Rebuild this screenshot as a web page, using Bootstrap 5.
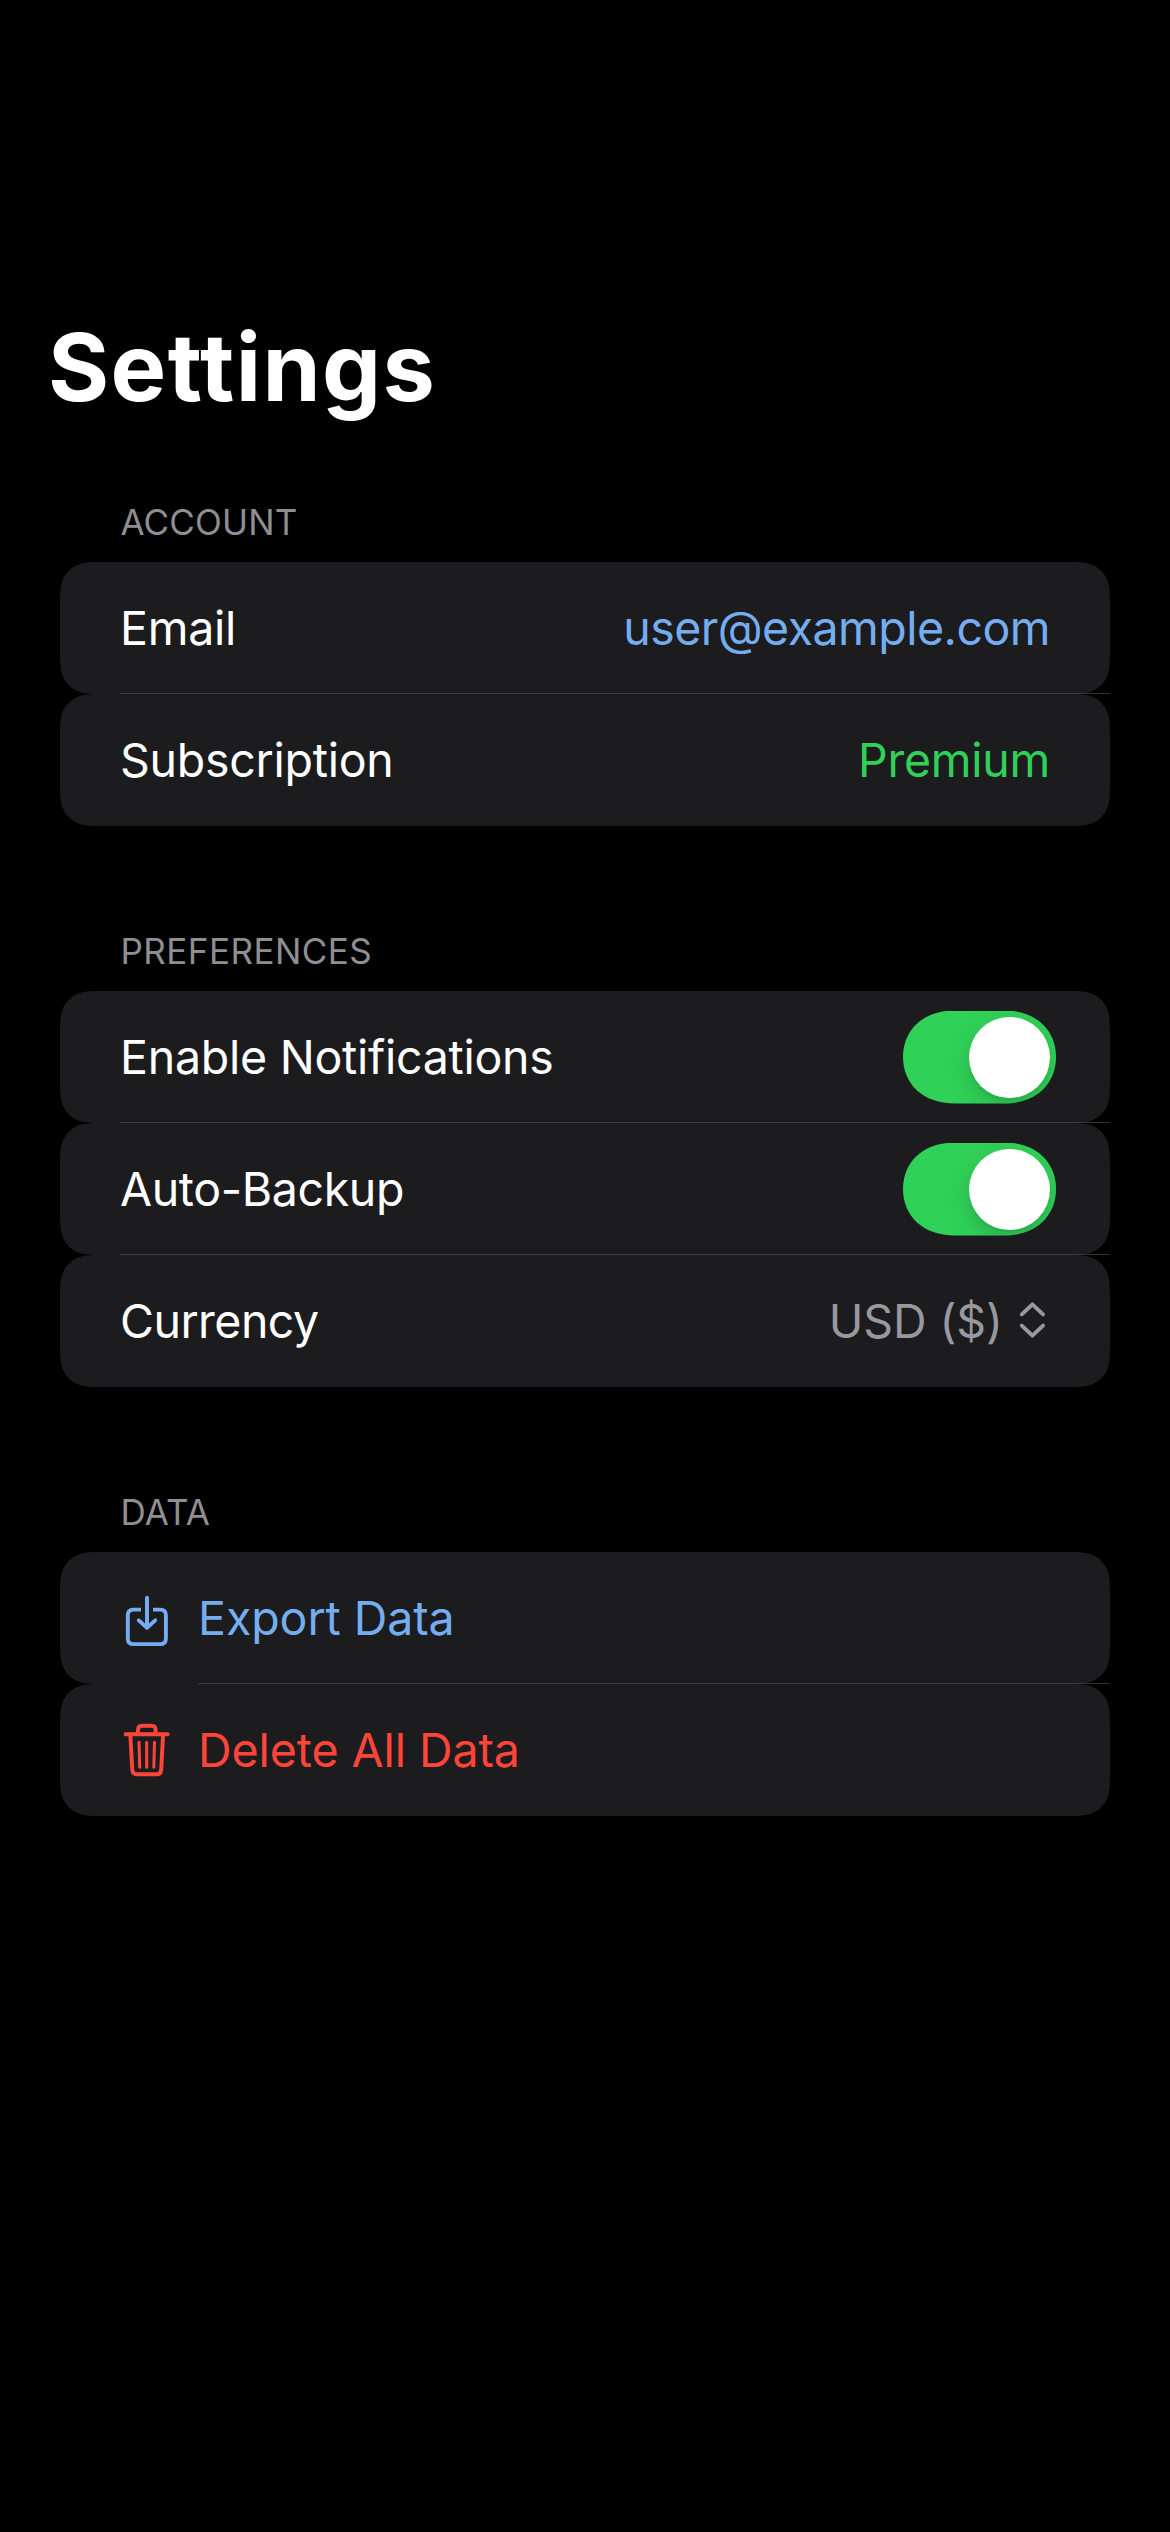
<!DOCTYPE html>
<html lang="en" data-bs-theme="dark">
<head>
<meta charset="utf-8">
<meta name="viewport" content="width=device-width, initial-scale=1">
<title>Settings</title>
<link href="https://cdn.jsdelivr.net/npm/bootstrap@5.3.0/dist/css/bootstrap.min.css" rel="stylesheet">
<style>
  body {
    background: #000;
    color: #fff;
    font-family: Inter, "Liberation Sans", sans-serif;
    min-height: 2532px;
  }
  .settings-page { padding: 310px 60px 0; }
  .page-title {
    font-size: 93.5px;
    line-height: 115px;
    font-weight: 700;
    letter-spacing: 1.4px;
    margin: 0 0 76px -12px;
  }
  .settings-section { margin-bottom: 104px; }
  .section-label {
    font-size: 35px;
    line-height: 42px;
    font-weight: 400;
    letter-spacing: .15px;
    color: #8e8e93;
    padding-left: 60.5px;
    margin-bottom: 19px;
  }
  .label-wide { letter-spacing: .47px; }
  .settings-row {
    height: 132px;
    padding: 0 60px;
    font-size: 46.5px;
    line-height: 56px;
    letter-spacing: -.26px;
    background: none;
    border: 0;
    color: #fff;
    isolation: isolate;
  }
  /* row background with smooth, continuous corners */
  .settings-row::before {
    content: "";
    position: absolute;
    inset: 0;
    z-index: -1;
    background: #1c1c1e;
    clip-path: path("M45.9 0H1004.1C1017.3 0 1024 0 1029.9 2L1031.1 2.3C1038.8 5.1 1044.9 11.2 1047.7 18.9C1050 26 1050 32.7 1050 45.9V86.1C1050 99.3 1050 106 1047.7 113.1C1044.9 120.8 1038.8 126.9 1031.1 129.7L1029.9 130C1024 132 1017.3 132 1004.1 132H45.9C32.7 132 26 132 20.1 130L18.9 129.7C11.2 126.9 5.1 120.8 2.3 113.1C0 106 0 99.3 0 86.1V45.9C0 32.7 0 26 2.3 18.9C5.1 11.2 11.2 5.1 18.9 2.3L20.1 2C26 0 32.7 0 45.9 0Z");
  }
  .settings-row:not(:last-child)::after {
    content: "";
    position: absolute;
    left: 60px;
    right: 0;
    bottom: 0;
    height: 1px;
    background: rgba(84, 84, 88, .6);
  }
  .icon-row:not(:last-child)::after { left: 138px; }
  .tight { letter-spacing: -.53px; }
  .snug { letter-spacing: -.38px; }
  .plain { letter-spacing: -.07px; }
  .tone-blue { color: #74aef0; }
  .tone-green { color: #30d158; }
  .tone-red { color: #ff453a; }
  .tone-gray { color: #98989f; }
  .row-icon { width: 78px; height: 132px; fill: none; stroke: currentColor; stroke-width: 3.9; stroke-linecap: round; stroke-linejoin: round; }
  .chevrons { width: 47px; height: 132px; fill: none; stroke: currentColor; stroke-width: 3.9; stroke-linecap: round; stroke-linejoin: round; }
  .toggle {
    width: 153px;
    height: 93px;
    padding: 6px;
    margin-right: -6px;
    background: #30d158;
    clip-path: path("M0 46.5C0 19.5 20 0 52 0H101C133 0 153 19.5 153 46.5C153 73.5 133 93 101 93H52C20 93 0 73.5 0 46.5Z");
  }
  .knob {
    width: 81px;
    height: 81px;
    background: #fff;
    box-shadow: 0 9px 24px rgba(0, 0, 0, .16), 0 3px 3px rgba(0, 0, 0, .06);
  }
</style>
<script src="https://cdn.jsdelivr.net/npm/bootstrap@5.3.0/dist/js/bootstrap.bundle.min.js"></script>
</head>
<body>
<main class="settings-page">
  <h1 class="page-title">Settings</h1>

  <section class="settings-section">
    <h2 class="section-label">ACCOUNT</h2>
    <div class="list-group">
      <div class="list-group-item settings-row d-flex justify-content-between align-items-center">
        <span>Email</span><span class="tone-blue tight">user@example.com</span>
      </div>
      <div class="list-group-item settings-row d-flex justify-content-between align-items-center">
        <span>Subscription</span><span class="tone-green">Premium</span>
      </div>
    </div>
  </section>

  <section class="settings-section">
    <h2 class="section-label label-wide">PREFERENCES</h2>
    <div class="list-group">
      <div class="list-group-item settings-row d-flex justify-content-between align-items-center">
        <span>Enable Notifications</span>
        <span class="toggle d-flex justify-content-end" role="switch" aria-checked="true"><span class="knob rounded-circle"></span></span>
      </div>
      <div class="list-group-item settings-row d-flex justify-content-between align-items-center">
        <span class="snug">Auto-Backup</span>
        <span class="toggle d-flex justify-content-end" role="switch" aria-checked="true"><span class="knob rounded-circle"></span></span>
      </div>
      <div class="list-group-item settings-row d-flex justify-content-between align-items-center">
        <span class="tight">Currency</span>
        <span class="d-flex align-items-center tone-gray">
          <span class="plain">USD ($)</span>
          <svg class="chevrons" viewBox="0 0 47 132"><path d="M18.8 59.4L29.4 49.4L40 59.4M18.8 70.6L29.4 80.6L40 70.6"/></svg>
        </span>
      </div>
    </div>
  </section>

  <section class="settings-section">
    <h2 class="section-label">DATA</h2>
    <div class="list-group">
      <div class="list-group-item settings-row icon-row d-flex align-items-center tone-blue">
        <svg class="row-icon" viewBox="0 0 78 132"><path stroke-linecap="butt" d="M21 57.6H13.5Q7.8 57.6 7.8 63.3V86.4Q7.8 92.1 13.5 92.1H40.2Q45.9 92.1 45.9 86.4V63.3Q45.9 57.6 40.2 57.6H33"/><path d="M27 45.8V75.8M18.8 68.4L27 75.9L35.2 68.4"/></svg>
        <span class="plain">Export Data</span>
      </div>
      <div class="list-group-item settings-row icon-row d-flex align-items-center tone-red">
        <svg class="row-icon" viewBox="0 0 78 132"><path d="M5.6 50.3H47.7M18 50V46Q18 41.8 22.2 41.8H31.4Q35.6 41.8 35.6 46V50M10.3 50.5L12.3 86Q12.6 90.2 16.8 90.2H36.7Q40.9 90.2 41.2 86L43.1 50.5"/><path stroke-width="3" d="M19 58.2L19.7 83.2M26.7 58.2V83.2M34.5 58.2L33.8 83.2"/></svg>
        <span class="plain">Delete All Data</span>
      </div>
    </div>
  </section>
</main>
</body>
</html>
